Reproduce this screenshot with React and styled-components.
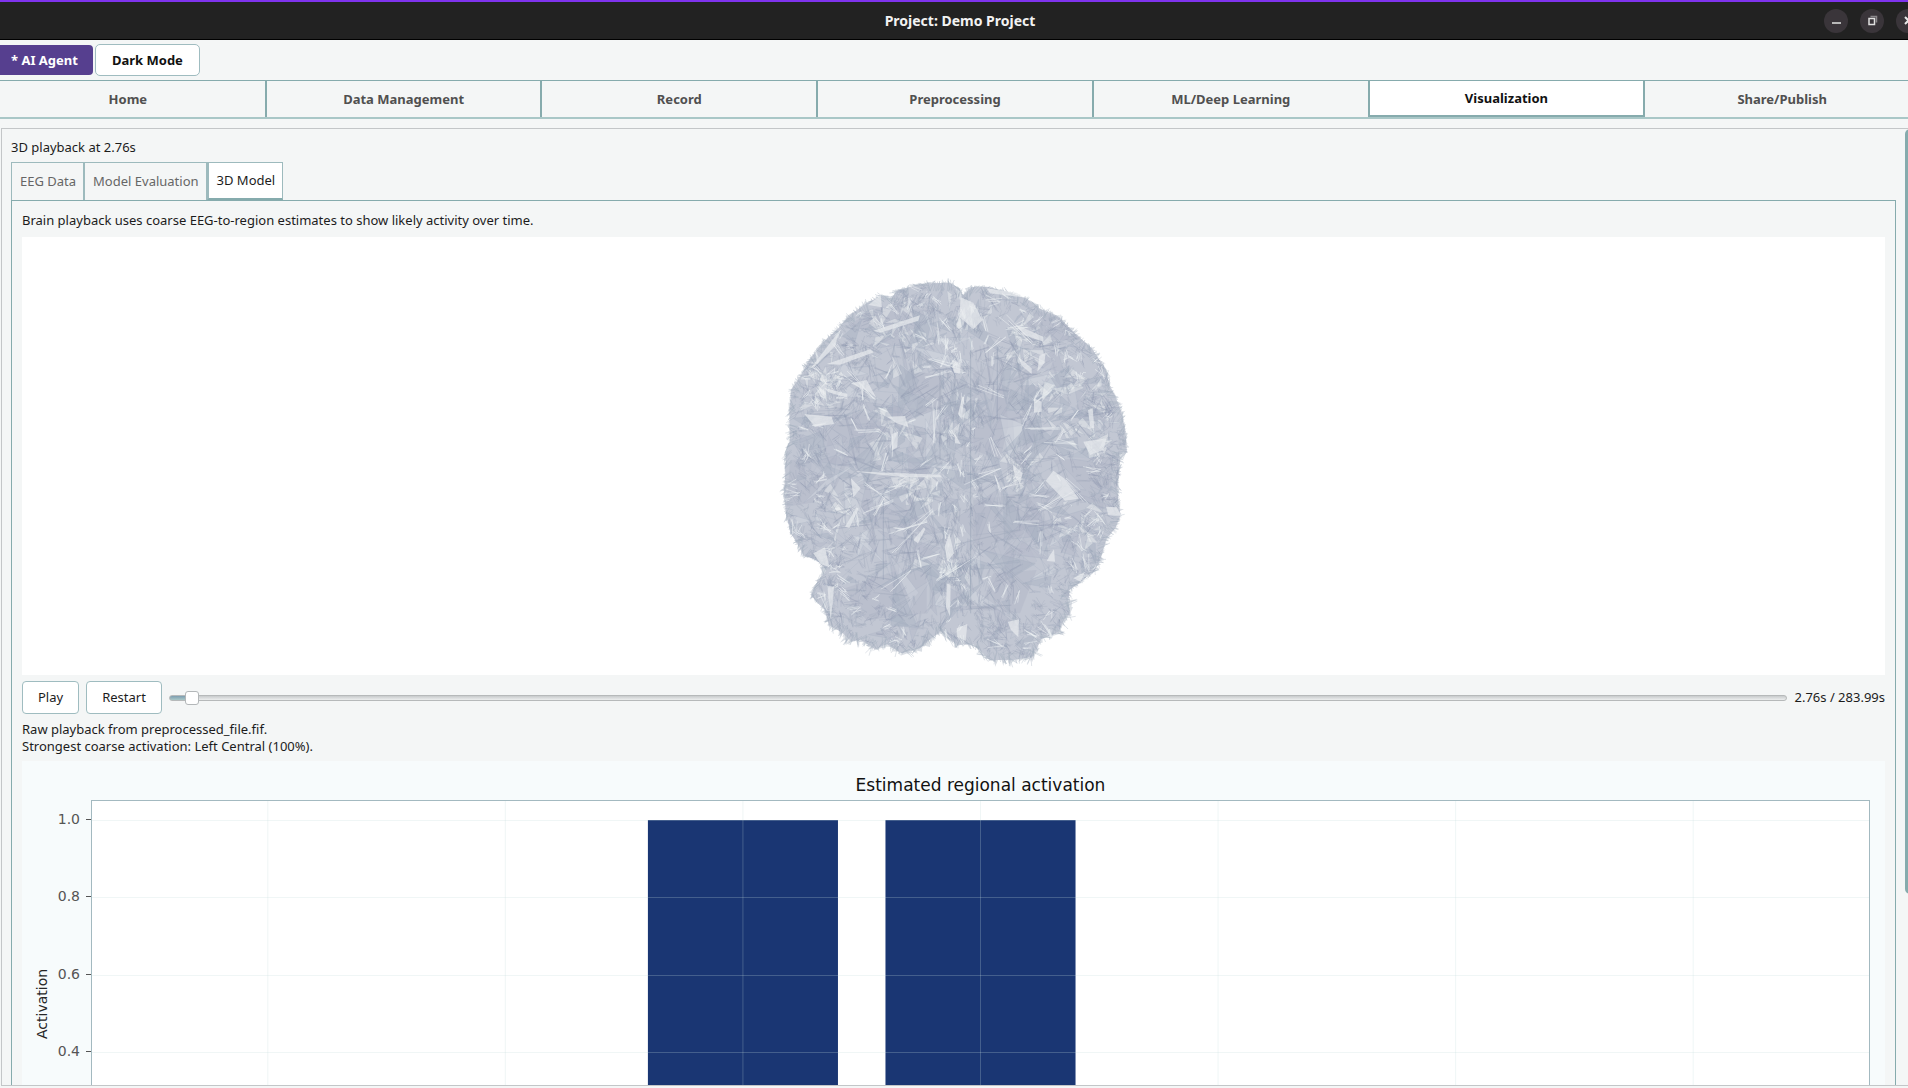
import React, { useState } from 'react'
import styled, { createGlobalStyle } from "styled-components";


const mainTabs = ['Home', 'Data Management', 'Record', 'Preprocessing', 'ML/Deep Learning', 'Visualization', 'Share/Publish']
const viewTabs = ['EEG Data', 'Model Evaluation', '3D Model']

export default function App() {
  const [mainTab, setMainTab] = useState('Visualization')
  const [viewTab, setViewTab] = useState('3D Model')
  const [time, setTime] = useState(2.76)

  return <Window>
    <GlobalStyle />

    <TitleBar>
        <Title>Project: Demo Project</Title>
        <WindowButtons>
            <WindowButton aria-label="Minimize">
                <svg width="11" height="11"><path d="M1 8h9" stroke="#b8b8b8" strokeWidth="2" /></svg>
            </WindowButton>
            <WindowButton aria-label="Restore">
                <svg width="11" height="11" fill="none">
                    <path d="M3.5 1.5h6v6" stroke="#8a878a" strokeWidth="1.5" />
                    <rect x="2" y="3.5" width="5.5" height="6" stroke="#e0e0e0" strokeWidth="1.5" />
                </svg>
            </WindowButton>
            <WindowButton aria-label="Close">
                <svg width="11" height="11"><path d="M2 2l7 7M9 2l-7 7" stroke="#e8e8e8" strokeWidth="2" /></svg>
            </WindowButton>
        </WindowButtons>
    </TitleBar>

    <Toolbar>
        <AgentButton>* AI Agent</AgentButton>
        <ModeButton>Dark Mode</ModeButton>
    </Toolbar>

    <MainTabs>
        {mainTabs.map(name => (
            <MainTab key={name} $active={name === mainTab} onClick={() => setMainTab(name)}>{name}</MainTab>
        ))}
    </MainTabs>

    <Panel>
        <Status>3D playback at 2.76s</Status>
        <ViewTabs>
            {viewTabs.map(name => (
                <ViewTab key={name} $active={name === viewTab} onClick={() => setViewTab(name)}>{name}</ViewTab>
            ))}
        </ViewTabs>

        <ViewPage>
            <Intro>Brain playback uses coarse EEG-to-region estimates to show likely activity over time.</Intro>
            <BrainCanvas><Brain /></BrainCanvas>

            <Controls>
                <Button>Play</Button>
                <Button>Restart</Button>
                <Slider
                    type="range"
                    aria-label="Playback position"
                    min="0"
                    max="283.99"
                    step="0.01"
                    value={time}
                    onChange={e => setTime(Number(e.target.value))}
                    style={{ '--played': `${time / 283.99 * 100}%` }}
                />
                <span>{time.toFixed(2)}s / 283.99s</span>
            </Controls>

            <Notes>
                <p>Raw playback from preprocessed_file.fif.</p>
                <p>Strongest coarse activation: Left Central (100%).</p>
            </Notes>

            <ActivationChart />
        </ViewPage>
        <ScrollThumb />
    </Panel>
  </Window>
}


// heights of the bars, one for each region
const activation = [0, 0, 1, 1, 0, 0, 0]
const ticks = [1.0, 0.8, 0.6, 0.4]
const plotHeight = 405
const yOf = v => Math.round(plotHeight * (1 - v / 1.05))
const xOf = i => `${(i + 0.74) / 7.48 * 100}%`

function ActivationChart() {
  return <Chart>
    <ChartTitle>Estimated regional activation</ChartTitle>
    <AxisLabel>Activation</AxisLabel>
    <Axis width="41" height={plotHeight}>
        {ticks.map(t => (
            <g key={t}>
                <text x="30" y={yOf(t) + 5} textAnchor="end">{t.toFixed(1)}</text>
                <path d={`M36 ${yOf(t) + 0.5}h5`} stroke="#555" />
            </g>
        ))}
    </Axis>
    <Plot>
        <svg width="100%" height={plotHeight}>
            {activation.map((v, i) => v > 0 && (
                <rect key={i} x={`${(i + 0.34) / 7.48 * 100}%`} y={yOf(v)} width={`${0.8 / 7.48 * 100}%`} height={plotHeight * v / 1.05} fill="#1a3673" />
            ))}
            {activation.map((v, i) => (
                <line key={i} x1={xOf(i)} x2={xOf(i)} y1="0" y2={plotHeight} stroke="#c4dada" strokeOpacity="0.25" />
            ))}
            {ticks.map(t => (
                <line key={t} x1="0" x2="100%" y1={yOf(t) + 0.5} y2={yOf(t) + 0.5} stroke="#c4dada" strokeOpacity="0.25" />
            ))}
        </svg>
    </Plot>
  </Chart>
}


// Brain mesh seen from the back, in a 1200 x 1260 box
const outline = [
  605,110, 600,90, 570,68, 520,70, 470,75, 410,92, 390,122, 365,107, 320,130, 270,165, 235,205, 190,247,
  150,297, 118,355, 94,388, 88,460, 90,540, 78,580, 76,640, 72,700, 78,760, 92,820, 115,855, 132,888, 165,895,
  200,930, 172,965, 152,1005, 192,1045, 207,1095, 247,1118, 275,1145, 300,1138, 345,1168, 380,1152,
  425,1180, 480,1165, 515,1135, 545,1112, 568,1135, 590,1155, 640,1152, 690,1200, 760,1200, 818,1190,
  843,1138, 896,1116, 912,1078, 930,1060, 925,1020, 928,990, 975,955, 1005,930, 1022,895, 1040,835,
  1066,805, 1082,765, 1076,735, 1072,680, 1080,600, 1078,580, 1100,576, 1096,510, 1084,455, 1064,405,
  1050,380, 1035,325, 995,265, 938,214, 896,170, 840,146, 800,116, 740,95, 680,80, 635,82,
]

const lightFacets = [
  [602,112, 640,128, 668,180, 640,208, 598,170], [200,312, 330,268, 342,277, 240,314],
  [340,212, 480,166, 475,182, 360,218], [152,325, 236,215, 226,258, 165,318],
  [765,193, 850,230, 850,245, 790,224], [775,290, 815,325, 815,342, 785,317],
  [832,335, 838,287, 857,278, 853,310], [822,415, 845,425, 845,455, 822,458],
  [857,662, 880,632, 912,655, 957,716, 915,722], [380,470, 435,468, 446,502, 410,490],
  [395,522, 414,515, 412,562, 395,572], [272,370, 320,360, 348,412, 326,395],
  [192,383, 262,402, 262,413, 205,397], [133,462, 215,470, 222,492, 165,500],
  [607,412, 613,410, 605,478, 594,462], [583,518, 602,552, 585,550],
  [743,1085, 777,1078, 775,1132, 753,1110], [202,978, 222,980, 220,1010, 212,1080],
  [280,634, 540,644, 545,652, 440,652, 360,644], [273,655, 302,685, 280,712],
  [758,613, 788,640, 780,672, 765,650], [590,1105, 622,1092, 617,1142, 592,1130],
  [870,885, 882,868, 885,905, 860,903], [984,450, 998,445, 1003,505, 991,505],
  [1038,740, 1070,742, 1085,768, 1045,766], [940,955, 975,935, 962,965],
  [160,880, 195,862, 208,922, 182,912], [325,135, 362,105, 366,142],
  [568,820, 582,880, 562,905, 554,860], [560,970, 572,975, 570,1070, 558,1040],
  [255,800, 290,742, 296,746, 268,804], [460,840, 492,802, 496,808, 474,850],
  [575,300, 602,310, 600,340, 582,338],
  [680,85, 770,98, 790,112, 690,100], [970,545, 1040,535, 1030,570, 990,585],
]

const darkFacets = [
  [265,195, 350,145, 540,150, 450,182, 320,208], [210,500, 305,450, 385,500, 300,600, 190,620],
  [430,330, 545,345, 545,560, 440,580, 470,450], [640,340, 730,300, 745,500, 720,600, 640,570],
  [305,720, 430,730, 440,800, 310,810], [780,360, 850,370, 820,540, 795,640], [700,940, 830,930, 780,1060, 660,1050],
  [880,600, 1060,590, 1050,720, 960,730], [90,600, 270,590, 210,720, 80,740], [240,990, 500,900, 500,1060, 320,1080],
  [640,720, 800,700, 900,840, 740,900, 640,860], [830,150, 900,175, 960,240, 870,240, 800,190],
]

// areas where many light slivers meet: x, y, radius
const lightAreas = [
  [200,380,110], [420,230,100], [620,160,60], [800,270,90], [920,400,110], [1000,520,70],
  [400,540,60], [600,480,50], [570,900,60], [250,760,60], [960,800,90], [450,690,80], [770,640,50],
]

// small fixed-seed generator, so the mesh is the same on every render
function makeRandom(seed) {
  let s = seed
  return () => {
    s = (s * 1664525 + 1013904223) % 4294967296
    return s / 4294967296
  }
}

function isInside(x, y) {
  let hit = false
  const n = outline.length
  for (let i = 0, j = n - 2; i < n; j = i, i += 2) {
    const [xi, yi, xj, yj] = [outline[i], outline[i + 1], outline[j], outline[j + 1]]
    if ((yi > y) !== (yj > y) && x < (xj - xi) * (y - yi) / (yj - yi) + xi) hit = !hit
  }
  return hit
}

function polygon(points) {
  let d = `M${points[0]} ${points[1]}`
  for (let i = 2; i < points.length; i += 2) d += `L${points[i]} ${points[i + 1]}`
  return d + 'Z'
}

function buildMesh() {
  const rand = makeRandom(97)
  const at = (x, y, angle, r) => [Math.round(x + Math.cos(angle) * r), Math.round(y + Math.sin(angle) * r)]
  const pick = () => {
    let x, y
    do { x = 60 + rand() * 1050; y = 60 + rand() * 1160 } while (!isInside(x, y))
    return [x, y]
  }
  const isMiddle = x => Math.abs(x - 600) < 60
  // the rim and the middle are finely broken, the rest has long fibres
  const isFine = (x, y) => isMiddle(x) || Math.hypot((x - 590) / 510, (y - 620) / 570) > 0.8
  const direction = x => isMiddle(x) ? Math.PI / 2 * (rand() < 0.5 ? 1 : -1) + (rand() - 0.5) * 0.5 : rand() * Math.PI * 2

  const facets = []
  const addFacet = (x, y, a, len, tone) => {
    const p = at(x, y, a, len)
    const q = at(x, y, a + 0.06 + rand() * 0.6, len * (0.5 + rand() * 0.6))
    if (isInside(...p) && isInside(...q)) facets.push({ d: polygon([Math.round(x), Math.round(y), ...p, ...q]), tone })
  }
  for (let i = 0; i < 520; i++) {
    const [x, y] = pick()
    const len = isFine(x, y) ? 15 + rand() * 60 : 50 + rand() * 150
    const shade = rand()
    addFacet(x, y, direction(x), len, shade < 0.3 ? 0 : shade < 0.6 ? 1 : shade < 0.7 ? 2 : 3)
  }
  lightAreas.forEach(([cx, cy, r]) => {
    for (let i = 0; i < r / 3; i++) {
      const [x, y] = at(cx, cy, rand() * Math.PI * 2, rand() * r)
      addFacet(x, y, direction(x), 12 + rand() * 60, 4)
    }
  })

  const lines = ['', '', '']
  for (let i = 0; i < 2000; i++) {
    const [x, y] = pick()
    const fine = isFine(x, y)
    if (!fine && rand() < 0.5) continue
    const a = direction(x)
    const count = fine ? 4 : 3
    const size = fine ? 12 + rand() * 34 : 25 + rand() * rand() * 180
    const tone = rand() < 0.15 ? 2 : i % 2
    for (let k = 0; k < count; k++) {
      const p = at(x, y, a + (rand() - 0.5) * (fine ? 1.2 : 0.3), size * (0.5 + rand() * 0.5))
      const jitter = fine ? 16 : 8
      if (isInside(...p)) lines[tone] += `M${Math.round(x + rand() * jitter)} ${Math.round(y + rand() * jitter)}L${p[0]} ${p[1]}`
    }
  }

  // uneven tufts that stick out of the edge, each with its own lean and reach
  let spikes = ''
  let hairs = ''
  for (let i = 0, n = outline.length; i < n; i += 2) {
    const [x1, y1, x2, y2] = [outline[i], outline[i + 1], outline[(i + 2) % n], outline[(i + 3) % n]]
    const tufts = Math.ceil(Math.hypot(x2 - x1, y2 - y1) / 16)
    for (let k = 0; k < tufts; k++) {
      const lean = (rand() - 0.5) * 2
      const tall = (y1 > 1040 ? 30 : 17) * (0.3 + rand() * 0.7)
      for (let h = 0; h < 5; h++) {
        const t = (k + rand()) / tufts
        const x = x1 + (x2 - x1) * t
        const y = y1 + (y2 - y1) * t
        const out = Math.atan2(y - 620, x - 600) + lean + (rand() - 0.5) * 0.7
        const tip = at(x, y, out, tall * rand())
        const left = at(x, y, out + 2.8, 24)
        const right = at(x, y, out - 2.6, 20)
        if (h % 2) spikes += polygon([...tip, ...left, ...right])
        else hairs += `M${tip[0]} ${tip[1]}L${left[0]} ${left[1]}`
      }
    }
  }
  return { facets, lines, spikes, hairs }
}

const mesh = buildMesh()
const facetTones = ['#a8b0c2', '#b2b8c9', '#d9dde4', '#c3c8d5', '#f0f2f4']
const lineTones = ['#8592a8', '#97a1b4', '#eef1f4']

function Brain() {
  return <BrainSvg viewBox="0 0 1200 1260" role="img" aria-label="Brain model">
    <path d={mesh.spikes} fill="#cbd0d9" fillOpacity="0.7" />
    <path d={polygon(outline)} fill="#c2c7d3" />
    {darkFacets.map((p, i) => <path key={i} d={polygon(p)} fill="#aeb5c6" fillOpacity="0.4" />)}
    {mesh.facets.map((f, i) => <path key={i} d={f.d} fill={facetTones[f.tone]} fillOpacity="0.42" stroke="#8c98ae" strokeWidth="1" strokeOpacity="0.4" />)}
    <path d={mesh.hairs} stroke="#a3adbd" strokeWidth="2" strokeOpacity="0.5" />
    {mesh.lines.map((d, i) => <path key={i} d={d} stroke={lineTones[i]} strokeWidth={i === 2 ? 3 : 2} strokeOpacity={i === 2 ? 0.5 : 0.3} />)}
    {lightFacets.map((p, i) => <path key={i} d={polygon(p)} fill="#eaedef" fillOpacity="0.7" />)}
    <path d="M632 230V1060M712 260V480M540 330V600M370 720V960" stroke="#8391a8" strokeWidth="3" strokeOpacity="0.35" />
  </BrainSvg>
}


const GlobalStyle = createGlobalStyle`
 * {
    box-sizing: border-box;
 }
 body {
    margin: 0;
    background: #f4f6f6;
    color: #1c1c1c;
    font: 13px/17px "Noto Sans", sans-serif;
 }
 button, input {
    font: inherit;
    color: inherit;
    margin: 0;
 }
 p {
    margin: 0;
 }
`

const Window = styled.div`
 height: 100vh;
 overflow: hidden;
 display: flex;
 flex-direction: column;
`

const TitleBar = styled.header`
 flex: none;
 height: 40px;
 margin-right: -12px;
 display: grid;
 grid-template-columns: 1fr auto 1fr;
 align-items: center;
 background: #222222;
 border-top: 2px solid #7f33ee;
 border-bottom: 1px solid #000000;
`

const Title = styled.div`
 grid-column: 2;
 color: #f2f2f2;
 font-size: 14px;
 font-weight: 700;
`

const WindowButtons = styled.div`
 display: flex;
 justify-content: flex-end;
 gap: 12px;
`

const WindowButton = styled.button`
 width: 24px;
 height: 24px;
 padding: 0;
 border: 0;
 border-radius: 50%;
 background: #3a353a;
 display: flex;
 align-items: center;
 justify-content: center;
`

const Toolbar = styled.div`
 flex: none;
 height: 40px;
 display: flex;
 align-items: center;
 gap: 2px;
`

const AgentButton = styled.button`
 height: 30px;
 padding: 0 15px 0 11px;
 border: 0;
 border-radius: 0 4px 4px 0;
 background: #563f8f;
 color: #ffffff;
 font-weight: 700;
`

const ModeButton = styled.button`
 height: 32px;
 padding: 0 16px;
 border: 1px solid #9fbcc0;
 border-radius: 5px;
 background: #ffffff;
 color: #111111;
 font-weight: 700;
`

const MainTabs = styled.nav`
 flex: none;
 height: 39px;
 margin: 0 -13px 0 -9px;
 display: flex;
 border-top: 1px solid #86abad;
 border-bottom: 2px solid #a9c7c7;
`

const MainTab = styled.button`
 flex: 1;
 padding: 0;
 border: 0;
 border-right: 2px solid #86abad;
 border-bottom: ${p => p.$active ? '2px solid #86abad' : '0'};
 background: ${p => p.$active ? '#ffffff' : 'transparent'};
 color: ${p => p.$active ? '#111111' : '#505050'};
 font-weight: 700;
`

const Panel = styled.main`
 position: relative;
 flex: 1;
 min-height: 0;
 margin: 9px 0 2px 1px;
 padding: 10px 12px 0 9px;
 border: 1px solid #c3c6c8;
 border-right: 0;
 overflow: hidden;
`

const Status = styled.p``

const ViewTabs = styled.div`
 margin-top: 6px;
 display: flex;
`

const ViewTab = styled.button`
 height: 38px;
 padding: 0 7px 0 8px;
 border: 1px solid #9dbabd;
 border-left-width: ${p => p.$active ? '2px' : '1px'};
 border-bottom: ${p => p.$active ? '2px solid #86abad' : '0'};
 background: ${p => p.$active ? '#ffffff' : 'transparent'};
 color: ${p => p.$active ? '#1c1c1c' : '#666666'};
`

const ViewPage = styled.section`
 padding: 11px 10px;
 border: 1px solid #86abad;
`

const Intro = styled.p``

const BrainCanvas = styled.div`
 height: 438px;
 margin-top: 8px;
 background: #ffffff;
 display: flex;
 justify-content: center;
`

const BrainSvg = styled.svg`
 width: 400px;
 height: 420px;
 margin-top: 23px;
 margin-left: 13px;
 fill: none;
`

const Controls = styled.div`
 margin-top: 6px;
 display: flex;
 align-items: center;
 gap: 7px;
`

const Button = styled.button`
 height: 33px;
 padding: 0 15px;
 border: 1px solid #9fbcc0;
 border-radius: 4px;
 background: #ffffff;
`

const Slider = styled.input`
 flex: 1;
 height: 16px;
 appearance: none;
 background: transparent;

 &::-webkit-slider-runnable-track {
    height: 6px;
    border: 1px solid #b6b9ba;
    border-radius: 3px;
    background: linear-gradient(#7d9db0, #a9c7c7) 0 0 / var(--played) 100% no-repeat, linear-gradient(#c8cbcc, #eceeee);
 }
 &::-webkit-slider-thumb {
    appearance: none;
    width: 14px;
    height: 14px;
    margin-top: -5px;
    border: 1px solid #b3b7b9;
    border-radius: 3px;
    background: #ffffff;
 }
`

const Notes = styled.div`
 margin-top: 7px;
`

const Chart = styled.figure`
 margin: 6px 0 0;
 padding: 0 15px 0 12px;
 display: grid;
 grid-template-columns: 16px 41px 1fr;
 grid-template-rows: 39px auto;
 background: #f7fbfc;
 color: #262626;
 font: 14px/16px "DejaVu Sans", sans-serif;
`

const ChartTitle = styled.figcaption`
 grid-column: 3;
 align-self: center;
 padding-top: 8px;
 text-align: center;
 color: #111111;
 font-size: 17px;
`

const AxisLabel = styled.div`
 grid-column: 1;
 writing-mode: vertical-rl;
 transform: rotate(180deg);
 text-align: center;
`

const Axis = styled.svg`
 text {
    fill: #555555;
 }
`

const Plot = styled.div`
 border: 1px solid #a3b9c0;
 background: #ffffff;

 svg {
    display: block;
 }
`

const ScrollThumb = styled.div`
 position: absolute;
 top: 0;
 right: -7px;
 width: 10px;
 height: 80%;
 border-radius: 5px;
 background: #86abad;
`
